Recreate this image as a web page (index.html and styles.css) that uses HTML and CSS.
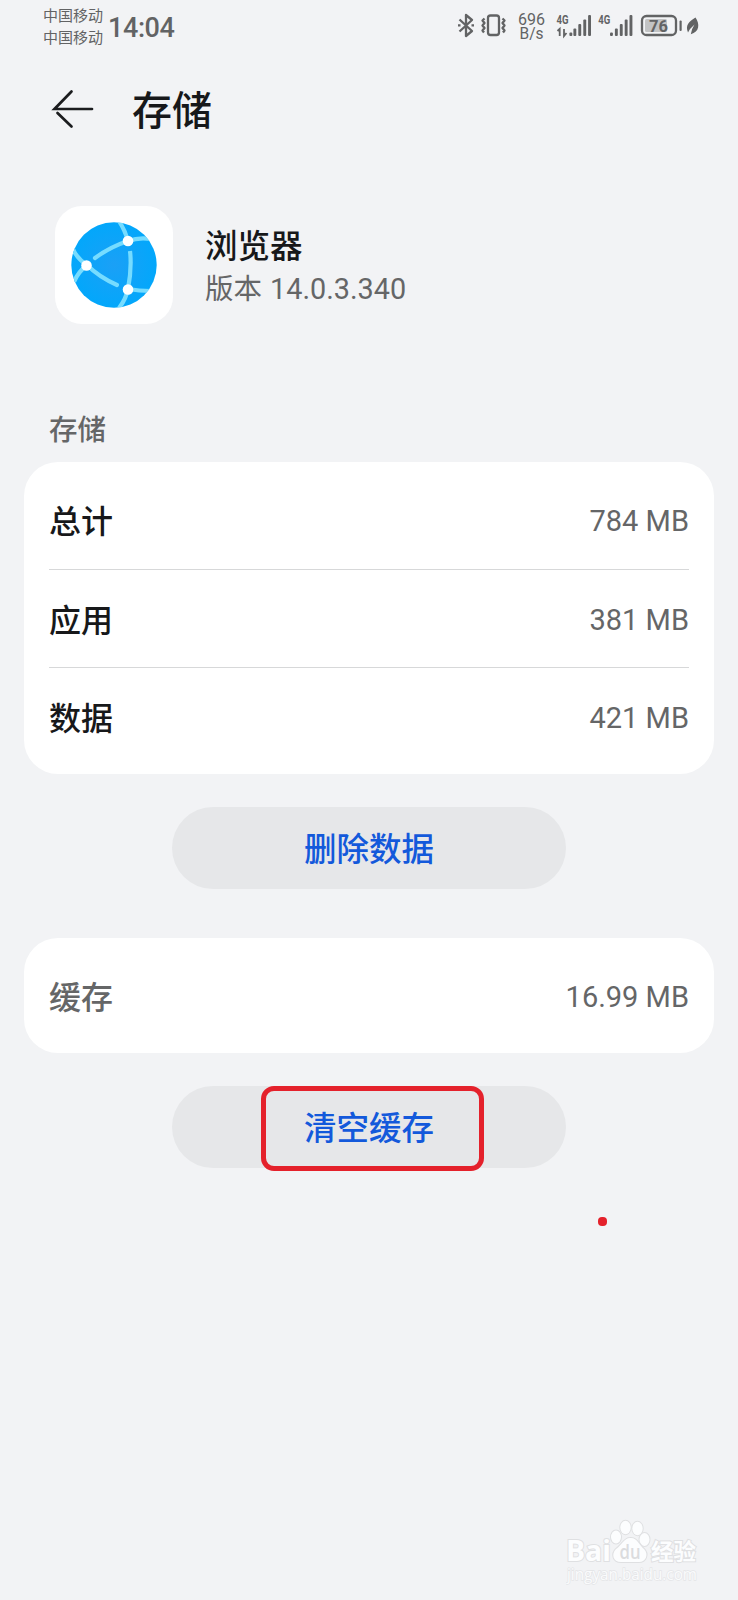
FILE: index.html
```
<!DOCTYPE html>
<html lang="zh-CN">
<head>
<meta charset="utf-8">
<title>存储</title>
<link rel="stylesheet" href="styles.css">
</head>
<body>
<main class="screen">
  <div class="status">
    <div class="carriers"><span>中国移动</span><span>中国移动</span></div>
    <div class="clock">14:04</div>
    <svg class="status-icons" width="246" height="32" viewBox="456 10 246 32">
      <g fill="none" stroke="#626364" stroke-width="2.300" stroke-linejoin="round">
        <path d="M459.500 19.500 L472 31 L466 36 V15 L472 20 L459.500 31.500"/>
        <path d="M458 25.400h2.500M471.500 25.400h2.500"/>
        <rect x="488" y="15.500" width="11" height="19.500" rx="2.500"/>
        <path d="M484.500 18.500l-2 2 2 2.500-2 2.500 2 2.500-2 2.500 1.500 2M502.500 18.500l2 2-2 2.500 2 2.500-2 2.500 2 2.500-1.500 2"/>
        <rect x="642" y="16" width="34" height="19" rx="4.500"/>
      </g>
      <rect x="645" y="19" width="22" height="13" rx="1.500" fill="#c2c3c4"/>
      <rect x="679.500" y="20.500" width="2.200" height="10.500" rx="1" fill="#626364"/>
      <g fill="#626364">
        <rect x="569.400" y="32.500" width="2.900" height="3.500" rx="1"/>
        <rect x="573.400" y="28.500" width="2.900" height="7.500" rx="1"/>
        <rect x="578.300" y="24" width="2.900" height="12" rx="1"/>
        <rect x="583.300" y="19.500" width="2.900" height="16.500" rx="1"/>
        <rect x="588.100" y="15" width="2.900" height="21" rx="1"/>
        <rect x="610" y="32.500" width="2.900" height="3.500" rx="1"/>
        <rect x="614.900" y="28.500" width="2.900" height="7.500" rx="1"/>
        <rect x="619.800" y="24" width="2.900" height="12" rx="1"/>
        <rect x="624.700" y="19.500" width="2.900" height="16.500" rx="1"/>
        <rect x="629.500" y="15" width="2.900" height="21" rx="1"/>
        <path d="M688 32.500C685 25 689 21.500 695.500 17.500C700 24 699.500 32 690.800 34.200Q691.500 29 694.500 24.500Q689.800 28.500 688 32.500Z"/>
      </g>
      <path d="M557.500 31l2.200-2.200V36M564 29v7l2.500-3" fill="none" stroke="#626364" stroke-width="1.800"/>
      <g class="status-text">
        <text x="518" y="24.800" font-size="16.500" textLength="27" lengthAdjust="spacingAndGlyphs">696</text>
        <text x="519.500" y="39" font-size="16" textLength="24" lengthAdjust="spacingAndGlyphs">B/s</text>
        <text class="strong" x="556.500" y="24.200" font-size="12.500" textLength="12" lengthAdjust="spacingAndGlyphs">4G</text>
        <text class="strong" x="598.300" y="24.200" font-size="12.500" textLength="12" lengthAdjust="spacingAndGlyphs">4G</text>
        <text class="strong" x="649" y="31.700" font-size="17" textLength="19" lengthAdjust="spacingAndGlyphs">76</text>
      </g>
    </svg>
  </div>

  <header class="bar">
    <svg class="back" width="44" height="40" viewBox="0 0 44 40" fill="none" stroke="#1b1c1e" stroke-width="2.700" stroke-linecap="round">
      <path d="M20.500 2.500 L3.500 20H41M6.500 24L20.500 37.500"/>
    </svg>
    <h1 class="title">存储</h1>
  </header>

  <section class="app">
    <div class="app-icon">
      <svg width="86" height="86" viewBox="0 0 86 86">
        <defs>
          <radialGradient id="globe"><stop offset="0" stop-color="#1ba0f6"/><stop offset="1" stop-color="#03a7fb"/></radialGradient>
          <clipPath id="disc"><circle cx="43" cy="43" r="42.700"/></clipPath>
        </defs>
        <circle cx="43" cy="43" r="42.700" fill="url(#globe)"/>
        <g clip-path="url(#disc)" fill="none" stroke="#76dcff" stroke-width="4.200">
          <path d="M48 -1Q54 8 57 19Q68 15 80 17"/>
          <path d="M57 19Q39 25 24 36" stroke-linecap="round"/>
          <path d="M59 29Q61 46 57 67"/>
          <path d="M1 25Q6 37 16 43Q7 50 3 60"/>
          <path d="M16 43Q28 55 46 63" stroke-linecap="round"/>
          <path d="M80 69Q68 69 57 67Q55 77 48 86"/>
        </g>
        <g fill="#fff"><circle cx="57" cy="19" r="5.300"/><circle cx="15.500" cy="43.500" r="5.300"/><circle cx="57" cy="67.500" r="5.300"/></g>
      </svg>
    </div>
    <div class="app-info">
      <div class="app-name">浏览器</div>
      <div class="app-version">版本 <span class="version-number">14.0.3.340</span></div>
    </div>
  </section>

  <h2 class="section-title">存储</h2>
  <section class="card">
    <div class="row"><span class="label">总计</span><span class="value">784 MB</span></div>
    <div class="row"><span class="label">应用</span><span class="value">381 MB</span></div>
    <div class="row"><span class="label">数据</span><span class="value">421 MB</span></div>
  </section>
  <button class="action">删除数据</button>
  <section class="card cache">
    <div class="row"><span class="label muted">缓存</span><span class="value">16.99 MB</span></div>
  </section>
  <button class="action clear">清空缓存<span class="highlight"></span><span class="dot"></span></button>

  <svg class="watermark" width="140" height="72" viewBox="0 0 140 72">
    <g class="mark">
      <ellipse cx="50" cy="18" rx="5" ry="6.500"/>
      <ellipse cx="59.500" cy="8.500" rx="5.200" ry="6.700"/>
      <ellipse cx="71.500" cy="9.500" rx="5.200" ry="6.700"/>
      <ellipse cx="78.500" cy="20.500" rx="5" ry="6.500"/>
      <path d="M64 19C71 18 73 26 78 30C83 35 80 43 73 43H55C47 43 45 35 50 30C56 26 58 19 64 19Z"/>
      <text class="latin" x="0" y="42" font-size="29" textLength="45" lengthAdjust="spacingAndGlyphs">Bai</text>
      <text class="cjk" x="85" y="41" font-size="23" textLength="45" lengthAdjust="spacingAndGlyphs">经验</text>
    </g>
    <text class="du" x="53.500" y="40" font-size="20" textLength="21" lengthAdjust="spacingAndGlyphs">du</text>
    <text class="url" x="1" y="60.500" font-size="16.500" textLength="130" lengthAdjust="spacingAndGlyphs">jingyan.baidu.com</text>
  </svg>
</main>
</body>
</html>
```
FILE: styles.css
```
* { box-sizing: border-box; }
body {
  margin: 0;
  background: #f2f3f5;
  font-family: Roboto, "Noto Sans CJK SC", sans-serif;
  color: #17181a;
}
h1, h2 { margin: 0; font-weight: 500; }
.screen {
  display: flex;
  flex-direction: column;
  width: 738px;
  height: 1600px;
  overflow: hidden;
}
.status {
  display: flex;
  height: 60px;
  padding: 4px 36px 0 43px;
  color: #626364;
}
.carriers {
  display: flex;
  flex-direction: column;
  width: 65px;
  font: 15px/21.5px "Noto Sans CJK SC", sans-serif;
}
.clock {
  font-size: 27px;
  font-weight: 500;
  line-height: 48px;
  letter-spacing: -0.4px;
}
.status-icons { margin: 6px 0 0 auto; }
.status-text { font-family: Roboto, sans-serif; fill: #626364; }
.strong { font-weight: 700; }
.bar {
  display: flex;
  align-items: center;
  height: 98px;
  padding: 0 51px;
  gap: 37px;
}
.title { font-size: 40px; line-height: 60px; padding-top: 6px; }
.app {
  display: flex;
  height: 118px;
  margin: 48px 55px 0;
  gap: 32px;
}
.app-icon {
  display: flex;
  align-items: center;
  justify-content: center;
  width: 118px;
  height: 118px;
  border-radius: 27px;
  background: #fff;
}
.app-info { padding-top: 20px; }
.app-name { font-size: 32.5px; font-weight: 500; line-height: 42px; }
.app-version { font-size: 28.5px; line-height: 42px; color: #656667; }
.version-number { font-size: 28.8px; margin-left: 1px; }
.section-title {
  margin: 85px 49px 0;
  height: 53px;
  color: #656667;
  font-size: 28.5px;
  line-height: 43px;
}
.card {
  margin: 0 24px;
  padding: 9px 25px;
  border-radius: 34px;
  background: #fff;
}
.row {
  display: flex;
  align-items: center;
  justify-content: space-between;
  height: 98px;
  padding-top: 2px;
}
.row + .row { border-top: 1px solid #d7d8d9; }
.label { font-size: 32px; font-weight: 500; padding-bottom: 4px; }
.muted { color: #656667; }
.value { font-size: 29px; color: #656667; }
.action {
  position: relative;
  align-self: center;
  width: 394px;
  height: 82px;
  margin: 33px 0 49px;
  padding: 4px 0 0;
  border: 0;
  border-radius: 41px;
  background: #e6e7e9;
  color: #1359db;
  font: 500 32.5px/78px Roboto, "Noto Sans CJK SC", sans-serif;
}
.cache { height: 115px; }
.highlight {
  position: absolute;
  left: 89px;
  top: 0;
  width: 223px;
  height: 85px;
  border: 5px solid #e4212b;
  border-radius: 13px;
}
.dot {
  position: absolute;
  left: 426px;
  top: 131px;
  width: 9px;
  height: 9px;
  border-radius: 4px;
  background: #e4212b;
}
.watermark { margin: 302px 0 0 566px; }
.mark {
  fill: #fcfdfe;
  stroke: #dfe0e2;
  stroke-width: 2px;
  paint-order: stroke;
}
.mark .latin { font-family: "Open Sans", sans-serif; font-weight: 700; }
.mark .cjk { font-family: "Noto Sans CJK SC", sans-serif; font-weight: 700; }
.du { font-family: "Open Sans", sans-serif; font-weight: 600; fill: #dbdcde; }
.url {
  font-family: "Open Sans", sans-serif;
  fill: #fafbfc;
  stroke: #e4e5e7;
  stroke-width: 1.4px;
  paint-order: stroke;
}
```
